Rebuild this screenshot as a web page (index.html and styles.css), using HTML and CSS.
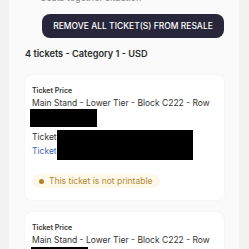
FILE: index.html
```html
<!DOCTYPE html>
<html>
<head>
<meta charset="utf-8">
<link rel="stylesheet" href="styles.css">
</head>
<body>
<div class="panel">
  <div class="cut-line">✓ Seats together situation</div>
  <div class="actions">
    <button class="btn-remove">REMOVE ALL TICKET(S) FROM RESALE</button>
  </div>
  <div class="group-title">4 tickets - Category 1 - USD</div>
  <div class="card">
    <div class="label">Ticket Price</div>
    <div class="seat">Main Stand - Lower Tier - Block C222 - Row</div>
    <div class="redact redact-row"></div>
    <div class="ticket-lines">
      <div class="lines-text">
        <div class="line">Ticket</div>
        <div class="line link">Ticket</div>
      </div>
      <div class="redact redact-ticket"></div>
    </div>
    <div class="badge"><span class="dot"></span>This ticket is not printable</div>
  </div>
  <div class="card">
    <div class="label">Ticket Price</div>
    <div class="seat">Main Stand - Lower Tier - Block C222 - Row</div>
    <div class="redact redact-row2"></div>
  </div>
</div>
</body>
</html>
```
FILE: styles.css
```css
html, body {
  margin: 0;
  padding: 0;
  background: #f2f2f2;
  font-family: Inter, "Noto Sans", sans-serif;
  overflow: hidden;
  height: 249px;
}
.panel {
  margin: 0 10px 0 9px;
  background: #fafafa;
  padding: 0 15px 0 16px;
  height: 249px;
  overflow: hidden;
}
.cut-line {
  margin-top: -8px;
  height: 12px;
  font-size: 9px;
  line-height: 12px;
  color: #888;
  padding-left: 5px;
}
.actions {
  display: flex;
  justify-content: flex-end;
  margin-top: 10px;
}
.btn-remove {
  width: 182px;
  height: 24px;
  border: none;
  border-radius: 8px;
  background: #27263a;
  color: #ffffff;
  font-family: Inter, "Noto Sans", sans-serif;
  font-size: 8.5px;
  font-weight: 500;
  padding: 0;
  white-space: nowrap;
}
.group-title {
  margin-top: 10px;
  font-size: 9.2px;
  font-weight: 600;
  color: #2b2b2b;
  line-height: 12px;
}
.card {
  margin-top: 15px;
  background: #ffffff;
  border-radius: 8px;
  box-shadow: 0 0 3px rgba(0,0,0,0.05);
  padding: 11px 7px 12px 7px;
}
.card + .card {
  margin-top: 12px;
}
.label {
  font-size: 7px;
  font-weight: 600;
  color: #333;
  line-height: 10px;
}
.seat {
  font-size: 8.5px;
  color: #333;
  line-height: 12px;
  margin-top: 1px;
  white-space: nowrap;
}
.redact {
  background: #000;
}
.redact-row {
  width: 67px;
  height: 18px;
  margin-left: -2px;
}
.redact-row2 {
  width: 57px;
  height: 18px;
  margin-left: -1px;
  margin-top: 1px;
}
.ticket-lines {
  display: flex;
  margin-top: 3px;
}
.lines-text {
  display: flex;
  flex-direction: column;
  gap: 2px;
  padding-top: 1px;
}
.line {
  font-size: 8.5px;
  line-height: 12px;
  color: #333;
}
.line.link {
  color: #4768b3;
}
.redact-ticket {
  width: 136px;
  height: 30px;
}
.badge {
  display: inline-flex;
  align-items: center;
  margin-top: 14px;
  height: 14px;
  padding: 0 8px 0 7px;
  border-radius: 7px;
  background: #fdf8ea;
  color: #b38a33;
  font-size: 8.5px;
}
.dot {
  width: 5px;
  height: 5px;
  border-radius: 50%;
  background: #b0832a;
  margin-right: 5px;
}
```
